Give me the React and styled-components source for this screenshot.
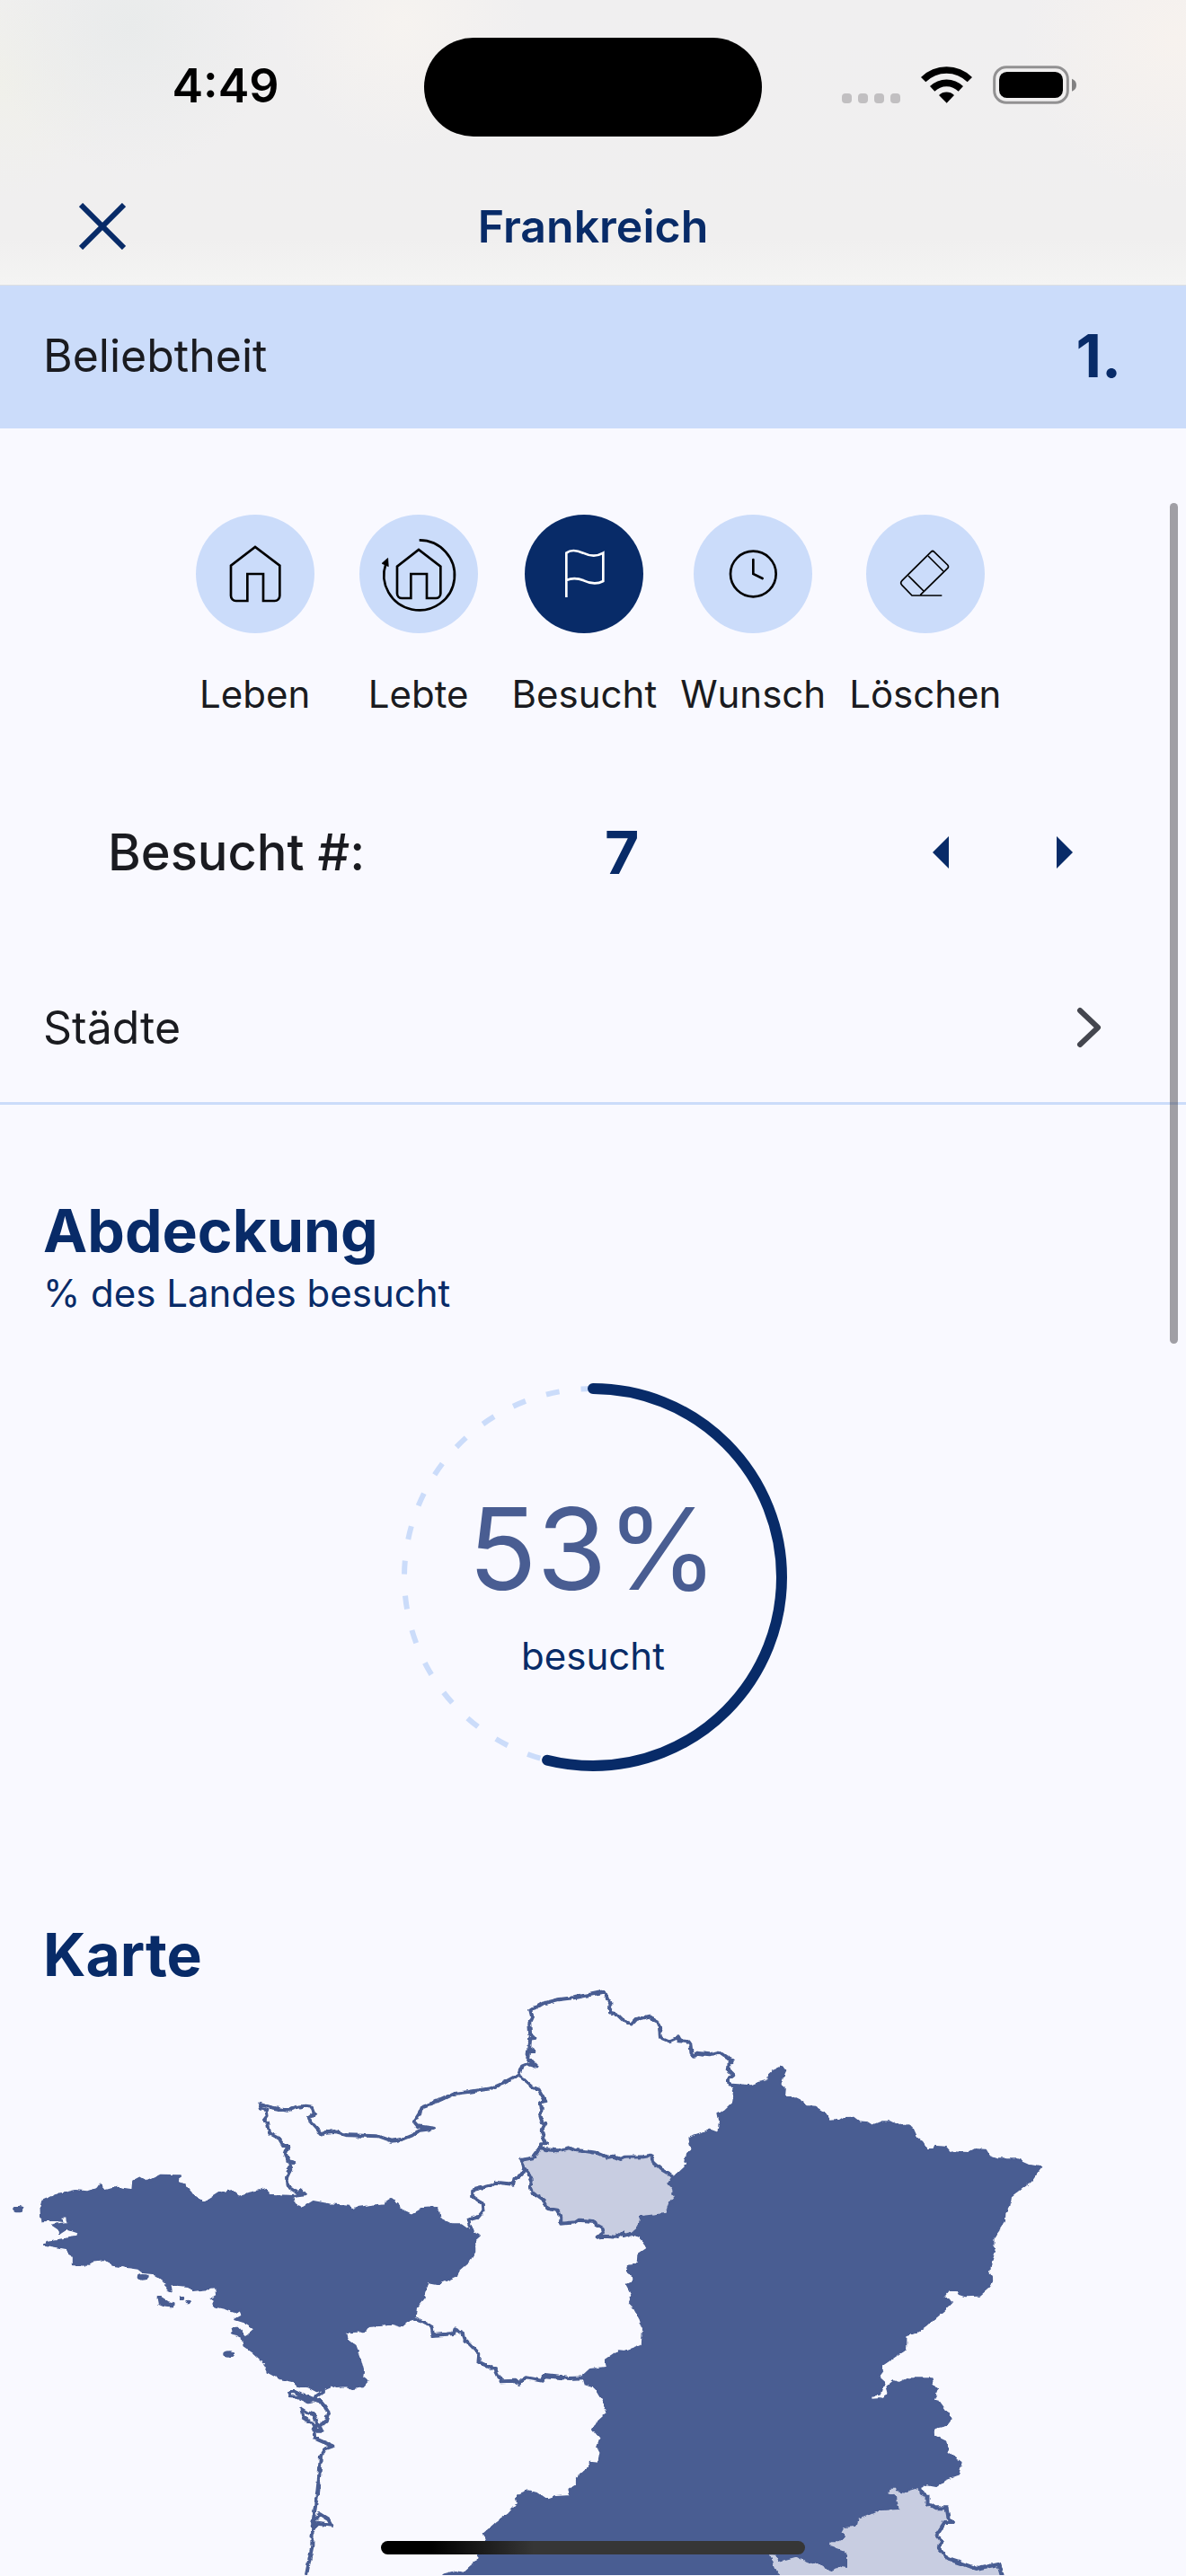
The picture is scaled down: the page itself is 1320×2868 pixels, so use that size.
import React, { useState } from "react";
import styled, { createGlobalStyle } from "styled-components";

const GlobalStyle = createGlobalStyle`
  * {
    box-sizing: border-box;
  }

  body {
    margin: 0;
    background: #f9f9ff;
    color: #1a1b20;
    font-family: Inter, "Liberation Sans", sans-serif;
  }

  button {
    border: none;
    background: none;
    padding: 0;
    font: inherit;
    color: inherit;
    cursor: pointer;
  }

  svg {
    display: block;
  }
`;

const Screen = styled.div`
  position: relative;
  min-height: 100vh;
  overflow: hidden;
`;

const Header = styled.header`
  background:
    radial-gradient(circle at 11% 10%, #e9ebeb 0, transparent 160px),
    radial-gradient(circle at 34% 8%, #f6f3f0 0, transparent 140px),
    radial-gradient(circle at 99% 14%, #f7f2ee 0, transparent 170px),
    radial-gradient(circle at 0% 28%, #f0f0ea 0, transparent 130px),
    linear-gradient(#f0eff0 0, #f0efef 84%, #f4f4f3 100%);
  border-bottom: 1px solid #dcdfe3;
`;

const StatusBar = styled.div`
  display: grid;
  grid-template-columns: 1fr 376px 1fr;
  align-items: center;
  padding: 42px 0 35px;
`;

const Clock = styled.time`
  padding: 0 0 2px 30px;
  text-align: center;
  font-size: 52px;
  font-weight: 600;
  line-height: 60px;
  color: #000;
`;

const Island = styled.div`
  height: 110px;
  border-radius: 55px;
  background: #000;
`;

const StatusIcons = styled.div`
  display: flex;
  align-items: flex-end;
  justify-content: flex-end;
  gap: 23px;
  padding: 0 121px 5px 0;
`;

const NavBar = styled.div`
  display: grid;
  grid-template-columns: 1fr auto 1fr;
  align-items: center;
  height: 130px;
  padding: 0 88px;
  color: #082b68;
`;

const CloseButton = styled.button`
  justify-self: start;
`;

const Title = styled.h1`
  margin: 0;
  font-size: 50px;
  font-weight: 600;
  line-height: 60px;
`;

const RankRow = styled.div`
  display: flex;
  align-items: center;
  justify-content: space-between;
  height: 159px;
  padding: 0 72px 4px 48px;
  background: #cbdcfa;
  font-size: 50px;
`;

const BigNumber = styled.strong`
  font-size: 66px;
  font-weight: 700;
  line-height: 72px;
  color: #082b68;
`;

const StatusPicker = styled.div`
  display: flex;
  justify-content: center;
  gap: 26px;
  padding-top: 96px;
`;

const StatusButton = styled.button`
  display: flex;
  flex-direction: column;
  align-items: center;
  gap: 38px;
  min-width: 156px;
  font-size: 42px;
  line-height: 60px;
`;

const StatusCircle = styled.span`
  width: 132px;
  height: 132px;
  border-radius: 50%;
  background: ${({ $active }) => ($active ? "#082b68" : "#cbdcfa")};
  color: ${({ $active }) => ($active ? "#fff" : "#000")};
`;

const CountRow = styled.div`
  display: flex;
  align-items: center;
  height: 96px;
  margin-top: 98px;
  padding: 0 66px 0 120px;
  font-size: 56px;
  font-weight: 500;
`;

const CountValue = styled(BigNumber)`
  flex: 1;
  text-align: center;
`;

const StepButton = styled.button`
  display: flex;
  align-items: center;
  justify-content: center;
  width: 138px;
  height: 96px;
  color: #082b68;
`;

const LinkRow = styled.a`
  display: flex;
  align-items: center;
  justify-content: space-between;
  height: 170px;
  margin-top: 63px;
  padding: 0 94px 0 48px;
  border-bottom: 3px solid #cbdcfa;
  color: inherit;
  font-size: 50px;
  text-decoration: none;
`;

const Section = styled.section`
  padding-top: ${({ $top }) => $top}px;
  color: #082b68;
`;

const SectionTitle = styled.h2`
  margin: 0;
  padding: 0 48px;
  font-size: 66px;
  font-weight: 700;
  line-height: 72px;
`;

const SectionHint = styled.p`
  margin: 4px 0 0;
  padding: 0 48px;
  font-size: 42px;
  line-height: 60px;
`;

const Gauge = styled.div`
  display: grid;
  justify-items: center;
  align-items: center;
  margin-top: 66px;

  > * {
    grid-area: 1 / 1;
  }
`;

const GaugeText = styled.div`
  display: flex;
  flex-direction: column;
  align-items: center;
  gap: 16px;
  padding-top: 12px;
  font-size: 42px;
  line-height: 60px;
`;

const GaugeValue = styled.span`
  font-size: 126px;
  line-height: 148px;
  color: #495d92;
`;

const MapImage = styled.svg`
  width: 100%;
  aspect-ratio: 1320 / 655;
  stroke: #495d92;
  stroke-width: 4px;
  stroke-linejoin: round;
  fill: none;

  path,
  ellipse {
    vector-effect: non-scaling-stroke;
  }
`;

const ScrollThumb = styled.div`
  position: absolute;
  top: 560px;
  right: 9px;
  width: 9px;
  height: 936px;
  border-radius: 5px;
  background: rgba(60, 58, 64, 0.47);
`;

const HomeIndicator = styled.div`
  position: fixed;
  bottom: 24px;
  left: 50%;
  width: 472px;
  height: 15px;
  border-radius: 8px;
  background: linear-gradient(90deg, #000 12%, #363636 36%);
  transform: translateX(-50%);
`;

const HomeIcon = () => (
  <path d="M172 288H134a17 17 0 0 1-17-17V170L198 108L280 170V271a17 17 0 0 1-17 17H225V198H172Z" />
);

const LivedIcon = () => (
  <>
    <path d="M172 279H142a16 16 0 0 1-16-16V173L198 117L271 173V263a16 16 0 0 1-16 16H225V198H172Z" />
    <path d="M200 85A118 117 0 1 1 88 165" />
    <path d="M95 145L75 163L97 173Z" fill="currentColor" strokeWidth="2" />
  </>
);

const FlagIcon = () => (
  <path d="M139 276V128C153 117 175 119 195 128C218 139 240 141 262 128V222C240 234 220 231 197 220C175 211 155 212 139 219" />
);

const ClockIcon = () => (
  <>
    <circle cx="199" cy="198" r="76" />
    <path d="M199 150V198L230 213" strokeLinecap="round" />
  </>
);

const EraserIcon = () => (
  <g strokeWidth="5">
    <path d="M253 270H153L120 236Q112 228 120 220L217 124Q222 119 227 124L272 168Q277 174 272 179L181 268" />
    <path d="M207 138L258 189M141 204L192 255" />
  </g>
);

const statuses = [
  { id: "live", label: "Leben", icon: HomeIcon },
  { id: "lived", label: "Lebte", icon: LivedIcon },
  { id: "visited", label: "Besucht", icon: FlagIcon },
  { id: "wish", label: "Wunsch", icon: ClockIcon },
  { id: "delete", label: "Löschen", icon: EraserIcon },
];

// region outlines, clockwise
const EAST =
  "M1936 665L1986 670L2006 660L2029 654L2031 635L2046 618L2063 608L2077 618L2069 640L2063 665L2076 678L2074 708L2096 708L2116 720L2134 738L2156 740L2181 760L2195 788L2221 785L2231 777L2256 776L2271 790L2293 792L2306 803L2331 790L2356 790L2371 800L2396 800L2413 812L2423 840L2439 858L2451 882L2469 882L2473 870L2501 872L2515 892L2563 894L2581 882L2604 884L2614 905L2639 916L2693 916L2721 932L2754 940L2739 965L2726 988L2703 1010L2673 1040L2669 1070L2657 1095L2656 1122L2639 1155L2624 1180L2624 1205L2631 1218L2621 1255L2615 1295L2626 1320L2616 1340L2589 1370L2553 1372L2536 1365L2531 1353L2508 1352L2491 1380L2511 1380L2518 1392L2496 1420L2468 1450L2450 1470L2428 1490L2396 1505L2395 1550L2368 1572L2333 1602L2333 1620L2321 1640L2338 1660L2326 1700L2303 1703L2303 1718L2330 1716L2351 1700L2346 1675L2363 1657L2378 1662L2400 1648L2463 1648L2465 1665L2478 1682L2468 1720L2483 1725L2503 1760L2515 1782L2503 1802L2470 1813L2471 1840L2503 1860L2506 1895L2541 1928L2533 1970L2500 1985L2476 2007L2453 2002L2433 2012L2426 2010L2403 2018L2396 2028L2371 2023L2368 2012L2351 2012L2348 2032L2368 2038L2374 2082L2323 2086L2298 2100L2268 2115L2263 2138L2233 2142L2225 2162L2233 2178L2218 2188L2196 2188L2191 2207L2225 2222L2238 2238L2238 2277L2218 2272L2196 2288L2171 2268L2133 2258L2111 2238L2058 2256L2052 2234L2030 2232L2043 2260L2046 2288L2060 2304L2060 2330L1170 2330L1170 2303L1205 2292L1225 2298L1245 2275L1260 2260L1265 2233L1285 2185L1280 2165L1310 2132L1345 2100L1368 2068L1366 2038L1395 2023L1420 2030L1447 2053L1470 2043L1508 2040L1505 2020L1525 2005L1525 1980L1558 1945L1560 1925L1583 1928L1588 1895L1580 1875L1588 1845L1568 1815L1576 1798L1605 1765L1596 1725L1578 1688L1568 1675L1545 1665L1540 1640L1560 1617L1606 1610L1601 1585L1636 1555L1653 1557L1698 1535L1701 1480L1693 1450L1678 1415L1663 1395L1671 1365L1658 1335L1674 1325L1671 1300L1658 1288L1660 1272L1688 1265L1690 1232L1712 1213L1693 1175L1673 1162L1693 1140L1696 1110L1763 1100L1771 1068L1790 1038L1780 1032L1781 1010L1771 995L1783 973L1821 928L1811 920L1816 895L1829 883L1821 845L1851 832L1878 818L1899 828L1903 785L1899 760L1916 752L1936 728L1941 690Z";

const WEST =
  "M108 1075L112 1055L150 1035L200 1020L230 1024L258 1012L265 998L280 1020L308 1010L350 1018L352 988L370 976L390 990L425 968L475 970L472 992L488 1000L510 1035L540 1060L580 1028L612 1020L632 1040L660 1028L705 1014L708 1034L775 1038L778 1062L800 1078L828 1056L870 1066L925 1070L932 1084L950 1076L1015 1066L1035 1050L1050 1064L1055 1080L1088 1100L1120 1077L1145 1075L1160 1085L1163 1115L1195 1135L1220 1135L1243 1155L1268 1170L1255 1185L1255 1225L1240 1255L1208 1290L1205 1305L1160 1330L1132 1323L1120 1380L1100 1410L1097 1445L1082 1448L1060 1472L1035 1463L975 1470L965 1488L912 1493L920 1520L940 1538L952 1580L960 1620L958 1645L973 1657L960 1675L932 1680L915 1675L890 1677L875 1670L855 1682L838 1690L815 1675L785 1670L775 1656L740 1647L710 1627L700 1595L670 1560L645 1538L640 1510L615 1495L612 1478L630 1478L650 1507L665 1495L672 1478L650 1460L623 1450L640 1438L636 1417L617 1424L595 1413L565 1405L570 1390L560 1380L573 1370L570 1345L510 1353L495 1338L450 1332L453 1357L440 1350L440 1325L410 1297L378 1293L365 1280L300 1268L278 1248L243 1253L235 1268L192 1267L192 1245L175 1215L118 1202L125 1190L205 1175L207 1160L178 1148L157 1165L155 1148L140 1135L160 1130L200 1125L178 1123L176 1108L162 1110L165 1122L145 1118L110 1120Z";

const PARIS =
  "M1427 875L1440 882L1475 886L1505 877L1520 885L1546 888L1581 895L1606 908L1621 905L1641 915L1651 908L1701 907L1721 902L1728 925L1751 950L1781 973L1771 995L1781 1010L1790 1038L1771 1068L1763 1100L1696 1110L1693 1140L1673 1162L1651 1170L1646 1162L1631 1175L1596 1172L1579 1175L1594 1160L1591 1145L1576 1135L1571 1122L1531 1118L1521 1126L1483 1130L1483 1105L1474 1085L1449 1080L1439 1055L1409 1028L1403 1010L1406 985L1396 960L1386 945L1383 930L1376 918L1409 910L1421 890Z";

const SOUTH_EAST =
  "M2433 2012L2438 2032L2453 2038L2453 2065L2473 2080L2503 2080L2508 2115L2518 2127L2498 2127L2476 2170L2490 2195L2480 2210L2506 2250L2543 2265L2583 2283L2640 2268L2648 2304L2648 2330L2060 2330L2020 2200L2340 2000Z";

const BORDERS = [
  "M775 1038L805 1033L795 1020L790 1028L762 1003L758 975L768 950L763 932L775 925L762 922L755 895L762 870L750 870L738 845L713 828L708 795L698 785L707 770L705 752L687 745L687 732L710 740L760 752L780 742L805 737L825 740L832 762L817 775L820 788L843 820L848 835L858 825L885 822L920 835L1000 838L1035 854L1065 848L1090 835L1110 818L1150 812L1105 805L1095 790L1110 760L1117 740L1150 725L1200 696L1240 690L1300 678L1330 662L1370 635",
  "M1370 635L1380 605L1395 597L1422 607L1410 592L1395 582L1397 555L1412 555L1400 545L1402 512L1412 510L1402 498L1400 460L1407 440L1402 415L1415 410L1435 395L1475 382L1520 375L1560 365L1599 355L1606 380L1614 395L1613 425L1631 430L1651 455L1671 464L1683 447L1719 437L1731 455L1743 462L1746 508L1769 520L1791 508L1796 520L1818 522L1826 535L1828 560L1836 572L1841 560L1876 565L1901 557L1921 575L1938 585L1928 598L1926 618L1939 635L1926 648L1928 665L1936 670",
  "M1370 635L1385 650L1410 675L1425 683L1435 705L1443 722L1430 730L1432 745L1428 765L1435 795L1443 795L1432 820L1437 840L1445 862L1430 862L1430 878",
  "M1386 945L1380 965L1360 980L1357 998L1310 992L1300 1002L1250 1018L1250 1040L1275 1062L1277 1090L1265 1108L1238 1118L1243 1140L1250 1158",
  "M1097 1445L1120 1460L1142 1475L1145 1503L1200 1497L1203 1483L1222 1495L1228 1515L1248 1540L1267 1565L1265 1592L1310 1618L1325 1657L1360 1655L1370 1665L1390 1645L1435 1655L1440 1638L1505 1647L1545 1645",
  "M855 1682L855 1690L838 1705L833 1720L815 1723L790 1710L770 1708L765 1692L780 1692L800 1705L845 1720L858 1740L868 1760L862 1790L845 1808L850 1820L835 1820L825 1795L802 1777L797 1748L815 1762L830 1768L840 1800L830 1820L832 1847L880 1873L860 1882L848 1908L845 1960L838 2040L826 2142L835 2118L845 2100L868 2118L877 2138L840 2132L826 2165L825 2210L810 2304",
];

const FranceMap = () => (
  <MapImage viewBox="0 339 3136 1965" preserveAspectRatio="none" role="img">
    <filter id="coast" x="-1%" y="-1%" width="102%" height="102%">
      <feTurbulence type="fractalNoise" baseFrequency="0.05" numOctaves="2" />
      <feDisplacementMap in="SourceGraphic" scale="13" xChannelSelector="R" yChannelSelector="G" />
    </filter>
    <g filter="url(#coast)">
      <path d={PARIS} fill="#c8cde1" />
      <path d={SOUTH_EAST} fill="#c8cde1" />
      {BORDERS.map((d) => (
        <path key={d} d={d} />
      ))}
      <g fill="#495d92" strokeWidth="2">
        <path d={EAST} />
        <path d={WEST} />
        <path d="M417 1377L426 1377L445 1393L460 1396L459 1408L440 1407L420 1397Z" />
        <ellipse cx="48" cy="1082" rx="12" ry="8" />
        <ellipse cx="377" cy="1309" rx="12" ry="7" />
        <ellipse cx="480" cy="1379" rx="5" ry="5" />
        <ellipse cx="497" cy="1392" rx="4" ry="4" />
        <ellipse cx="605" cy="1566" rx="13" ry="8" />
      </g>
    </g>
  </MapImage>
);

const CoverageRing = ({ value }) => (
  <svg width="440" height="440" viewBox="0 0 440 440" fill="none">
    <g transform="rotate(-90 220 220)">
      <circle
        cx="220"
        cy="220"
        r="210"
        stroke="#cbdcfa"
        strokeWidth="6"
        strokeDasharray="15 24.1"
        strokeDashoffset="24"
      />
      <circle
        cx="220"
        cy="220"
        r="210"
        pathLength="100"
        stroke="#082b68"
        strokeWidth="12"
        strokeLinecap="round"
        strokeDasharray={`${value} 200`}
      />
    </g>
  </svg>
);

const App = () => {
  const [status, setStatus] = useState("visited");
  const [visits, setVisits] = useState(7);
  const coverage = 53.9;

  return (
    <Screen>
      <GlobalStyle />
      <Header>
        <StatusBar>
          <Clock>4:49</Clock>
          <Island />
          <StatusIcons>
            <svg width="65" height="12" viewBox="0 0 65 12" fill="#c1bfc1">
              {[0, 18, 36, 54].map((x) => (
                <rect key={x} x={x} y="0" width="11" height="11" rx="4" />
              ))}
            </svg>
            <svg width="57" height="43" viewBox="0 0 171 129" fill="#000">
              <path d="M0 39A122 122 0 0 1 171 39L155 55A99 99 0 0 0 16 55Z" />
              <path d="M30 69A79 79 0 0 1 141 69L125 86A56 56 0 0 0 46 86Z" />
              <path d="M60 99A37 37 0 0 1 111 99L86 125Z" />
            </svg>
            <svg width="94" height="43" viewBox="0 0 282 129">
              <rect x="5" y="5" width="245" height="119" rx="40" fill="none" stroke="#929192" strokeWidth="9" />
              <rect x="21" y="21" width="213" height="87" rx="26" fill="#000" />
              <path d="M264 44Q279 50 279 65T264 86Z" fill="#828182" />
            </svg>
          </StatusIcons>
        </StatusBar>
        <NavBar>
          <CloseButton aria-label="Schließen">
            <svg width="52" height="52" viewBox="0 0 52 52" stroke="currentColor" strokeWidth="6">
              <path d="M2 2L50 50M50 2L2 50" />
            </svg>
          </CloseButton>
          <Title>Frankreich</Title>
        </NavBar>
      </Header>

      <main>
        <RankRow>
          <span>Beliebtheit</span>
          <BigNumber>1.</BigNumber>
        </RankRow>

        <StatusPicker>
          {statuses.map(({ id, label, icon: Icon }) => (
            <StatusButton key={id} aria-pressed={status === id} onClick={() => setStatus(id)}>
              <StatusCircle $active={status === id}>
                <svg width="132" height="132" viewBox="0 0 396 396" fill="none" stroke="currentColor" strokeWidth="8">
                  <Icon />
                </svg>
              </StatusCircle>
              {label}
            </StatusButton>
          ))}
        </StatusPicker>

        <CountRow>
          <span>Besucht #:</span>
          <CountValue>{visits}</CountValue>
          <StepButton aria-label="Weniger" onClick={() => setVisits(Math.max(0, visits - 1))}>
            <svg width="18" height="36" viewBox="0 0 18 36" fill="currentColor">
              <path d="M18 0V36L0 18Z" />
            </svg>
          </StepButton>
          <StepButton aria-label="Mehr" onClick={() => setVisits(visits + 1)}>
            <svg width="18" height="36" viewBox="0 0 18 36" fill="currentColor">
              <path d="M0 0V36L18 18Z" />
            </svg>
          </StepButton>
        </CountRow>

        <LinkRow href="#staedte">
          <span>Städte</span>
          <svg width="28" height="46" viewBox="0 0 28 46" fill="none" stroke="#44464f" strokeWidth="6">
            <path d="M4 4L24 23L4 42" strokeLinecap="round" strokeLinejoin="round" />
          </svg>
        </LinkRow>

        <Section $top={104}>
          <SectionTitle>Abdeckung</SectionTitle>
          <SectionHint>% des Landes besucht</SectionHint>
          <Gauge>
            <CoverageRing value={coverage} />
            <GaugeText>
              <GaugeValue>{Math.floor(coverage)}%</GaugeValue>
              <span>besucht</span>
            </GaugeText>
          </Gauge>
        </Section>

        <Section $top={164}>
          <SectionTitle>Karte</SectionTitle>
          <FranceMap />
        </Section>
      </main>

      <ScrollThumb />
      <HomeIndicator />
    </Screen>
  );
};

export default App;
